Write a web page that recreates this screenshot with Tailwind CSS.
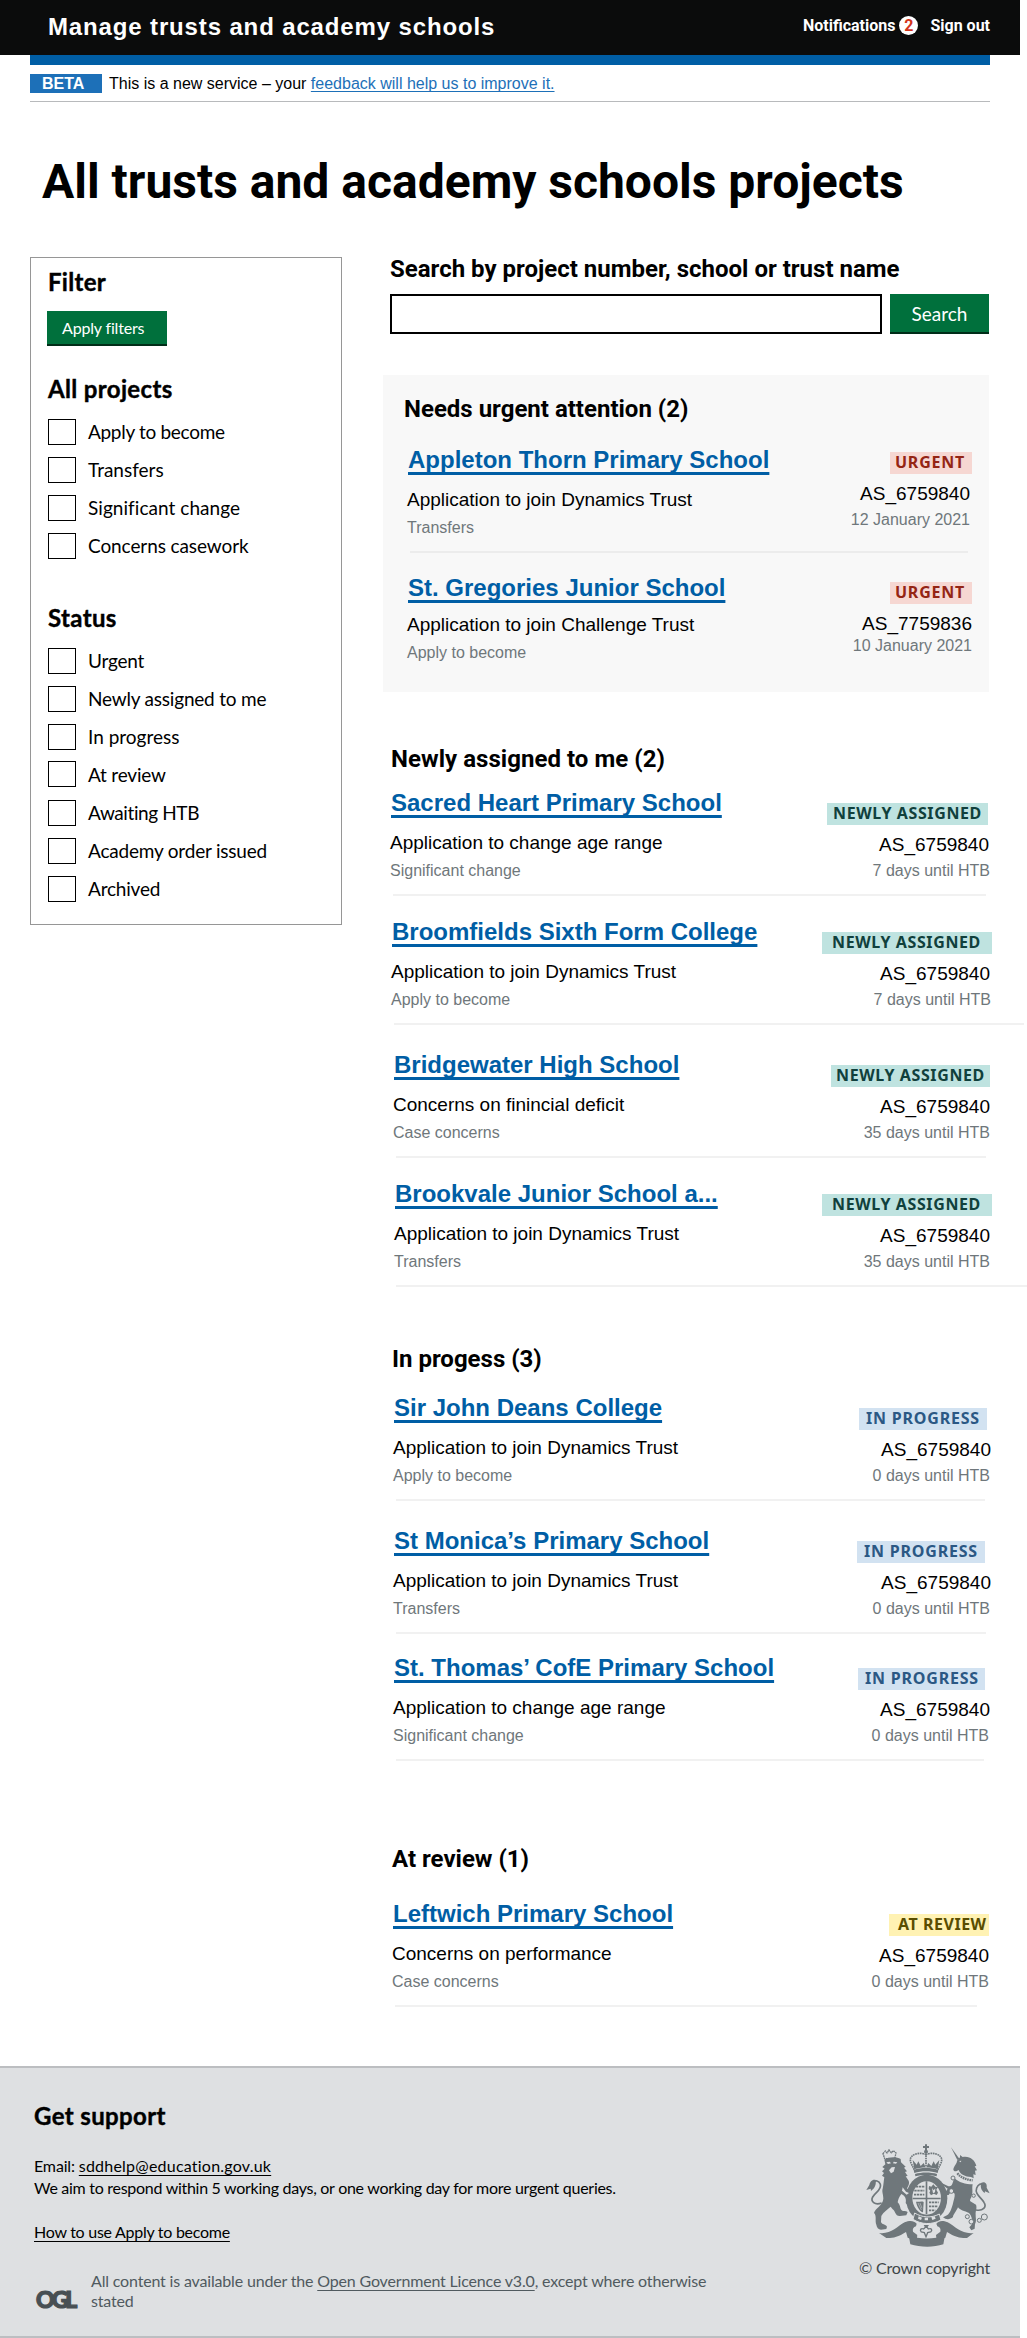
<!DOCTYPE html>
<html lang="en">
<head>
<meta charset="utf-8">
<title>Manage trusts and academy schools</title>
<script src="https://cdn.jsdelivr.net/npm/@tailwindcss/browser@4"></script>
</head>
<body class="bg-white text-black font-['Liberation_Sans',sans-serif]">
<div class="w-[1027px] overflow-hidden">
<header class="flex h-[55px] w-[1020px] justify-between bg-[#0b0c0c] pl-12 pr-[30px] text-white">
  <p class="pt-[13px] text-[24px] leading-[27px] font-bold tracking-[0.86px]">Manage trusts and academy schools</p>
  <nav class="flex items-start pt-4 font-['Roboto',sans-serif] text-[16px] leading-[19px] font-bold">
    <a>Notifications</a>
    <span class="ml-[4px] mr-[12px] size-[19px] rounded-full bg-white text-center text-[#d4351c]">2</span>
    <a>Sign out</a>
  </nav>
</header>

<div class="ml-[30px] w-[960px]">
  <div class="h-[10px] bg-[#005ea5]"></div>
  <div class="mt-[9px] flex border-b border-[#b8babc] pb-2 text-[16px] leading-[19px]">
    <strong class="w-[72px] bg-[#1d70b8] pl-[12px] text-white">BETA</strong>
    <p class="ml-[7px]">This is a new service – your <a class="text-[#1d70b8] underline decoration-1 underline-offset-[2px] [text-decoration-skip-ink:none]">feedback will help us to improve it.</a></p>
  </div>
  <h1 class="mt-[51px] pl-3 font-['Roboto',sans-serif] text-[48px] leading-[57px] font-bold">All trusts and academy schools projects</h1>
</div>

<div class="mt-[45px] ml-[30px] flex items-start">
  <!-- Filters -->
  <aside class="mt-[2px] h-[668px] w-[312px] shrink-0 border border-[#969696] pt-[9px] pl-[17px] font-['Lato',sans-serif]">
    <h2 class="text-[24px] leading-[29px] font-bold tracking-[0.3px] [-webkit-text-stroke:0.4px_black]">Filter</h2>
    <button class="mt-[15px] -ml-px block h-[35px] w-[120px] border-b-2 border-[#002d18] bg-[#00703c] pl-[15px] text-left text-[16px] leading-[29px] tracking-[-0.17px] text-white">Apply filters</button>
    <h3 class="mt-7 text-[24px] leading-[29px] font-bold tracking-[0.35px] [-webkit-text-stroke:0.4px_black]">All projects</h3>
    <ul class="mt-4 grid gap-3 text-[19px] leading-[23px]">
      <li class="flex h-[26px] gap-3"><span class="h-[26px] w-7 border border-black"></span><span class="pt-px tracking-[-0.3px]">Apply to become</span></li>
      <li class="flex h-[26px] gap-3"><span class="h-[26px] w-7 border border-black"></span><span class="pt-px">Transfers</span></li>
      <li class="flex h-[26px] gap-3"><span class="h-[26px] w-7 border border-black"></span><span class="pt-px tracking-[0.05px]">Significant change</span></li>
      <li class="flex h-[26px] gap-3"><span class="h-[26px] w-7 border border-black"></span><span class="pt-px tracking-[-0.1px]">Concerns casework</span></li>
    </ul>
    <h3 class="mt-11 text-[24px] leading-[29px] font-bold tracking-[0.35px] [-webkit-text-stroke:0.4px_black]">Status</h3>
    <ul class="mt-4 grid gap-3 text-[19px] leading-[23px] tracking-[-0.2px]">
      <li class="flex h-[26px] gap-3"><span class="h-[26px] w-7 border border-black"></span><span class="pt-px">Urgent</span></li>
      <li class="flex h-[26px] gap-3"><span class="h-[26px] w-7 border border-black"></span><span class="pt-px">Newly assigned to me</span></li>
      <li class="flex h-[26px] gap-3"><span class="h-[26px] w-7 border border-black"></span><span class="pt-px tracking-normal">In progress</span></li>
      <li class="flex h-[26px] gap-3"><span class="-mt-px h-[26px] w-7 border border-black"></span><span class="pt-px">At review</span></li>
      <li class="flex h-[26px] gap-3"><span class="h-[26px] w-7 border border-black"></span><span class="pt-px tracking-[-0.4px]">Awaiting HTB</span></li>
      <li class="flex h-[26px] gap-3"><span class="h-[26px] w-7 border border-black"></span><span class="pt-px">Academy order issued</span></li>
      <li class="flex h-[26px] gap-3"><span class="h-[26px] w-7 border border-black"></span><span class="pt-px">Archived</span></li>
    </ul>
  </aside>

  <main class="ml-[41px] w-[606px] shrink-0">
    <h2 class="pl-[7px] font-['Roboto',sans-serif] text-[24px] leading-[28px] font-bold">Search by project number, school or trust name</h2>
    <div class="mt-[11px] flex pl-[7px]">
      <input class="h-10 w-[492px] border-2 border-black" aria-label="Search">
      <button class="ml-2 h-10 w-[99px] border-b-2 border-[#002d18] bg-[#00703c] font-['Lato',sans-serif] text-[19px] leading-[33px] text-white">Search</button>
    </div>

    <!-- Needs urgent attention -->
    <section class="mt-[41px] h-[317px] bg-[#f8f8f8] pt-5">
      <h2 class="pl-[21px] font-['Roboto',sans-serif] text-[24px] leading-[28px] font-bold">Needs urgent attention (2)</h2>
      <article class="mt-[23px] flex justify-between pr-[19px] pl-6">
        <div>
          <h3 class="ml-px text-[24px] leading-[27px] font-bold text-[#005ea5] underline decoration-[2.5px] underline-offset-[4px] [text-decoration-skip-ink:none]">Appleton Thorn Primary School</h3>
          <p class="mt-4 text-[19px] leading-[21px]">Application to join Dynamics Trust</p>
          <p class="mt-[9px] text-[16px] leading-[17px] text-[#6f777b]">Transfers</p>
        </div>
        <div class="flex flex-col items-end">
          <span class="-mr-[2px] mt-[6px] h-[22px] w-[82px] bg-[#f6d7d2] pl-[5px] font-['Noto_Sans',sans-serif] text-[16px] leading-[21px] font-bold tracking-[0.77px] text-[#942514]">URGENT</span>
          <span class="mt-[9px] text-[19px] leading-[21px]">AS_6759840</span>
          <span class="mt-[7px] text-[16px] leading-[17px] text-[#6f777b]">12 January 2021</span>
        </div>
      </article>
      <div class="mt-[15px] ml-[27px] h-[2px] w-[558px] bg-[#ececec]"></div>
      <article class="mt-[21px] flex justify-between pr-[17px] pl-6">
        <div>
          <h3 class="ml-px text-[24px] leading-[27px] font-bold text-[#005ea5] underline decoration-[2.5px] underline-offset-[4px] [text-decoration-skip-ink:none]">St. Gregories Junior School</h3>
          <p class="mt-[13px] text-[19px] leading-[21px]">Application to join Challenge Trust</p>
          <p class="mt-[9px] text-[16px] leading-[17px] text-[#6f777b]">Apply to become</p>
        </div>
        <div class="flex flex-col items-end">
          <span class="mt-2 h-[22px] w-[82px] bg-[#f6d7d2] pl-[5px] font-['Noto_Sans',sans-serif] text-[16px] leading-[21px] font-bold tracking-[0.77px] text-[#942514]">URGENT</span>
          <span class="mt-[9px] text-[19px] leading-[21px]">AS_7759836</span>
          <span class="mt-[3px] text-[16px] leading-[17px] text-[#6f777b]">10 January 2021</span>
        </div>
      </article>
    </section>

    <!-- Newly assigned -->
    <section class="mt-[53px]">
      <h2 class="pl-2 font-['Roboto',sans-serif] text-[24px] leading-[28px] font-bold tracking-[0.04px]">Newly assigned to me (2)</h2>
      <article class="mt-4 flex justify-between pl-[7px]">
        <div>
          <h3 class="ml-px text-[24px] leading-[27px] font-bold text-[#005ea5] underline decoration-[2.5px] underline-offset-[4px] [text-decoration-skip-ink:none]">Sacred Heart Primary School</h3>
          <p class="mt-4 text-[19px] leading-[21px]">Application to change age range</p>
          <p class="mt-[9px] text-[16px] leading-[17px] text-[#6f777b]">Significant change</p>
        </div>
        <div class="flex flex-col items-end">
          <span class="mt-[14px] mr-[1px] h-[22px] w-[161px] bg-[#bfe3e0] pl-[6px] font-['Noto_Sans',sans-serif] text-[16px] leading-[21px] font-bold tracking-[0.62px] whitespace-nowrap text-[#10403c]">NEWLY ASSIGNED</span>
          <span class="mt-[9px] text-[19px] leading-[21px]">AS_6759840</span>
          <span class="-mr-px mt-[7px] text-[16px] leading-[17px] text-[#6f777b]">7 days until HTB</span>
        </div>
      </article>
      <div class="mt-[15px] ml-[10px] h-[2px] w-[593px] bg-[#f1f1f1]"></div>

      <article class="mt-[22px] flex justify-between pl-2">
        <div>
          <h3 class="ml-px text-[24px] leading-[27px] font-bold text-[#005ea5] underline decoration-[2.5px] underline-offset-[4px] [text-decoration-skip-ink:none]">Broomfields Sixth Form College</h3>
          <p class="mt-4 text-[19px] leading-[21px]">Application to join Dynamics Trust</p>
          <p class="mt-[9px] text-[16px] leading-[17px] text-[#6f777b]">Apply to become</p>
        </div>
        <div class="flex flex-col items-end">
          <span class="mt-[14px] -mr-[3px] h-[22px] w-[170px] bg-[#bfe3e0] pl-[10px] font-['Noto_Sans',sans-serif] text-[16px] leading-[21px] font-bold tracking-[0.62px] whitespace-nowrap text-[#10403c]">NEWLY ASSIGNED</span>
          <span class="-mr-px mt-[9px] text-[19px] leading-[21px]">AS_6759840</span>
          <span class="-mr-[2px] mt-[7px] text-[16px] leading-[17px] text-[#6f777b]">7 days until HTB</span>
        </div>
      </article>
      <div class="mt-[15px] ml-[11px] h-[2px] w-[630px] bg-[#f1f1f1]"></div>

      <article class="mt-[26px] flex justify-between pl-[10px]">
        <div>
          <h3 class="ml-px text-[24px] leading-[27px] font-bold text-[#005ea5] underline decoration-[2.5px] underline-offset-[4px] [text-decoration-skip-ink:none]">Bridgewater High School</h3>
          <p class="mt-4 text-[19px] leading-[21px]">Concerns on finincial deficit</p>
          <p class="mt-[9px] text-[16px] leading-[17px] text-[#6f777b]">Case concerns</p>
        </div>
        <div class="flex flex-col items-end">
          <span class="mt-[14px] -mr-px h-[22px] w-[159px] bg-[#bfe3e0] pl-[5px] font-['Noto_Sans',sans-serif] text-[16px] leading-[21px] font-bold tracking-[0.62px] whitespace-nowrap text-[#10403c]">NEWLY ASSIGNED</span>
          <span class="-mr-px mt-[9px] text-[19px] leading-[21px]">AS_6759840</span>
          <span class="-mr-px mt-[7px] text-[16px] leading-[17px] text-[#6f777b]">35 days until HTB</span>
        </div>
      </article>
      <div class="mt-[15px] ml-[13px] h-[2px] w-[590px] bg-[#f1f1f1]"></div>

      <article class="mt-[22px] flex justify-between pl-[11px]">
        <div>
          <h3 class="ml-px text-[24px] leading-[27px] font-bold text-[#005ea5] underline decoration-[2.5px] underline-offset-[4px] [text-decoration-skip-ink:none]">Brookvale Junior School a...</h3>
          <p class="mt-4 text-[19px] leading-[21px]">Application to join Dynamics Trust</p>
          <p class="mt-[9px] text-[16px] leading-[17px] text-[#6f777b]">Transfers</p>
        </div>
        <div class="flex flex-col items-end">
          <span class="mt-[14px] -mr-[3px] h-[22px] w-[170px] bg-[#bfe3e0] pl-[10px] font-['Noto_Sans',sans-serif] text-[16px] leading-[21px] font-bold tracking-[0.62px] whitespace-nowrap text-[#10403c]">NEWLY ASSIGNED</span>
          <span class="-mr-px mt-[9px] text-[19px] leading-[21px]">AS_6759840</span>
          <span class="-mr-px mt-[7px] text-[16px] leading-[17px] text-[#6f777b]">35 days until HTB</span>
        </div>
      </article>
      <div class="mt-[15px] ml-[13px] h-[2px] w-[631px] bg-[#f1f1f1]"></div>
    </section>

    <!-- In progress -->
    <section class="mt-[58px]">
      <h2 class="pl-[9px] font-['Roboto',sans-serif] text-[24px] leading-[28px] font-bold">In progess (3)</h2>
      <article class="mt-[21px] flex justify-between pl-[10px]">
        <div>
          <h3 class="ml-px text-[24px] leading-[27px] font-bold text-[#005ea5] underline decoration-[2.5px] underline-offset-[4px] [text-decoration-skip-ink:none]">Sir John Deans College</h3>
          <p class="mt-4 text-[19px] leading-[21px]">Application to join Dynamics Trust</p>
          <p class="mt-[9px] text-[16px] leading-[17px] text-[#6f777b]">Apply to become</p>
        </div>
        <div class="flex flex-col items-end">
          <span class="mt-[14px] mr-[2px] h-[22px] w-[128px] bg-[#d2e2f1] pl-[7px] font-['Noto_Sans',sans-serif] text-[16px] leading-[21px] font-bold tracking-[0.8px] text-[#2b5884]">IN PROGRESS</span>
          <span class="-mr-[2px] mt-[9px] text-[19px] leading-[21px]">AS_6759840</span>
          <span class="-mr-px mt-[7px] text-[16px] leading-[17px] text-[#6f777b]">0 days until HTB</span>
        </div>
      </article>
      <div class="mt-[15px] ml-[13px] h-[2px] w-[589px] bg-[#f1f1f1]"></div>

      <article class="mt-[26px] flex justify-between pl-[10px]">
        <div>
          <h3 class="ml-px text-[24px] leading-[27px] font-bold text-[#005ea5] underline decoration-[2.5px] underline-offset-[4px] [text-decoration-skip-ink:none]">St Monica’s Primary School</h3>
          <p class="mt-4 text-[19px] leading-[21px]">Application to join Dynamics Trust</p>
          <p class="mt-[9px] text-[16px] leading-[17px] text-[#6f777b]">Transfers</p>
        </div>
        <div class="flex flex-col items-end">
          <span class="mt-[14px] mr-1 h-[22px] w-[128px] bg-[#d2e2f1] pl-[7px] font-['Noto_Sans',sans-serif] text-[16px] leading-[21px] font-bold tracking-[0.8px] text-[#2b5884]">IN PROGRESS</span>
          <span class="-mr-[2px] mt-[9px] text-[19px] leading-[21px]">AS_6759840</span>
          <span class="-mr-px mt-[7px] text-[16px] leading-[17px] text-[#6f777b]">0 days until HTB</span>
        </div>
      </article>
      <div class="mt-[15px] ml-[13px] h-[2px] w-[590px] bg-[#f1f1f1]"></div>

      <article class="mt-5 flex justify-between pl-[10px]">
        <div>
          <h3 class="ml-px text-[24px] leading-[27px] font-bold text-[#005ea5] underline decoration-[2.5px] underline-offset-[4px] [text-decoration-skip-ink:none]">St. Thomas’ CofE Primary School</h3>
          <p class="mt-4 text-[19px] leading-[21px]">Application to change age range</p>
          <p class="mt-[9px] text-[16px] leading-[17px] text-[#6f777b]">Significant change</p>
        </div>
        <div class="flex flex-col items-end">
          <span class="mt-[14px] mr-1 h-[22px] w-[127px] bg-[#d2e2f1] pl-[7px] font-['Noto_Sans',sans-serif] text-[16px] leading-[21px] font-bold tracking-[0.8px] text-[#2b5884]">IN PROGRESS</span>
          <span class="-mr-px mt-[9px] text-[19px] leading-[21px]">AS_6759840</span>
          <span class="mt-[7px] text-[16px] leading-[17px] text-[#6f777b]">0 days until HTB</span>
        </div>
      </article>
      <div class="mt-[15px] ml-[13px] h-[2px] w-[588px] bg-[#f1f1f1]"></div>
    </section>

    <!-- At review -->
    <section class="mt-[84px]">
      <h2 class="pl-[9px] font-['Roboto',sans-serif] text-[24px] leading-[28px] font-bold">At review (1)</h2>
      <article class="mt-[27px] flex justify-between pl-[9px]">
        <div>
          <h3 class="ml-px text-[24px] leading-[27px] font-bold text-[#005ea5] underline decoration-[2.5px] underline-offset-[4px] [text-decoration-skip-ink:none]">Leftwich Primary School</h3>
          <p class="mt-4 text-[19px] leading-[21px]">Concerns on performance</p>
          <p class="mt-[9px] text-[16px] leading-[17px] text-[#6f777b]">Case concerns</p>
        </div>
        <div class="flex flex-col items-end">
          <span class="mt-[14px] h-[22px] w-[100px] bg-[#fff2b3] pl-[9px] font-['Noto_Sans',sans-serif] text-[16px] leading-[21px] font-bold tracking-[0.53px] text-[#594d00]">AT REVIEW</span>
          <span class="mt-[9px] text-[19px] leading-[21px]">AS_6759840</span>
          <span class="mt-[7px] text-[16px] leading-[17px] text-[#6f777b]">0 days until HTB</span>
        </div>
      </article>
      <div class="mt-[15px] ml-[12px] h-[2px] w-[582px] bg-[#f1f1f1]"></div>
    </section>
  </main>
</div>

<footer class="mt-[59px] flex h-[272px] w-[1020px] justify-between border-y-2 border-[#bcbec1] bg-[#dee0e2] pr-[30px] pl-[34px] font-['Lato',sans-serif] text-[16px] leading-[19px]">
  <div class="pt-[33px]">
    <h2 class="text-[24px] leading-[29px] font-bold tracking-[0.38px] [-webkit-text-stroke:0.4px_black]">Get support</h2>
    <p class="mt-[26px] tracking-[-0.15px]">Email: <a class="tracking-[0.22px] underline decoration-1 underline-offset-[3px] [text-decoration-skip-ink:none]">sddhelp@education.gov.uk</a></p>
    <p class="mt-[3px] tracking-[-0.28px]">We aim to respond within 5 working days, or one working day for more urgent queries.</p>
    <p class="mt-[25px] tracking-[-0.27px]"><a class="underline decoration-1 underline-offset-[3px] [text-decoration-skip-ink:none]">How to use Apply to become</a></p>
    <div class="mt-[30px] flex text-[#505a5f]">
      <span class="mt-[16px] w-[57px] pl-[2px] text-[23px] leading-[24px] font-black tracking-[-3px] text-[#484f53] [-webkit-text-stroke:1.2px_#484f53]">OGL</span>
      <p class="w-[640px] leading-5 tracking-[-0.17px]">All content is available under the <a class="underline decoration-1 underline-offset-[3px] [text-decoration-skip-ink:none]">Open Government Licence v3.0</a>, except where otherwise<br>stated</p>
    </div>
  </div>
  <div class="flex flex-col items-end pt-[76px]">
    <!-- Royal coat of arms -->
    <svg class="h-[103px] w-[124px]" viewBox="117 100 372 309" fill="#6f777b">
      <!-- crown -->
      <path d="M294 101h6v5h6v6h-6v6h-6v-6h-6v-6h6z"/>
      <circle cx="297" cy="123" r="6"/>
      <g fill="none" stroke="#6f777b" stroke-width="5" stroke-dasharray="5 2">
        <path d="M297 132c-14-8-46-4-47 15 0 11 8 19 12 32"/>
        <path d="M297 132c14-8 46-4 47 15 0 11-8 19-12 32"/>
        <path d="M297 134v34"/>
      </g>
      <path d="M257 148l12 14 5-10 7 14 9-9 7 15 7-15 9 9 7-14 5 10 12-14-5 28c-18-7-52-7-70 0z"/>
      <path d="M260 178c20-8 54-8 74 0l-2 9c-20-7-50-7-70 0z"/>
      <path d="M264 190c20-6 46-6 66 0l-1 7c-20-5-44-5-64 0z"/>
      <!-- garter and shield -->
      <ellipse cx="299" cy="263" rx="62" ry="71"/>
      <ellipse cx="299" cy="262" rx="43" ry="50" fill="#dee0e2"/>
      <path d="M296 212h5v99h-5zM257 261h84v5h-84z"/>
      <g fill="none" stroke="#6f777b" stroke-width="5" stroke-dasharray="7 2">
        <path d="M267 228h25M262 240h30M261 252h31M306 275h29M306 287h27M306 299h19"/>
      </g>
      <path d="M306 226l7 2 6-7 6 7 8 1-5 8 5 9-4 7-9-4-8 5-5-8 3-6-5-5z"/>
      <path d="M315 232l5 7 5-6-1 12-6 3z" fill="#dee0e2"/>
      <path d="M267 273c8 2 16-2 23 1l-2 31c-10-3-18-17-21-32z"/>
      <path d="M273 277l10 21M279 277l6 16" stroke="#dee0e2" stroke-width="1.5"/>
      <path d="M263 307c22 14 50 16 74 3l5 18c-27 15-59 14-84-2z" stroke="#dee0e2" stroke-width="3"/>
      <path d="M275 317l10 4-3 7-9-4zM293 321h10v8h-10zM313 320l10-3 3 7-10 4z" fill="#dee0e2"/>
      <!-- lion -->
      <path d="M168 129l7-8 5 6 6-9 7 8 6-6 8 7-4 17h-30z" fill="none" stroke="#6f777b" stroke-width="4" stroke-dasharray="5 2"/>
      <path d="M184 117h5v5h-5z"/>
      <path d="M172 147c11-8 36-10 49-2l1 10 14 13-5 3 9 11-6 2 8 12-6 1 8 12c5 8 0 18-4 24l9 9c8 8 6 24-1 35l6 3-5 7-7-3-6-7c3-13-2-22-13-27-6 8-10 16-11 25 10 10 6 22 14 25 4 2 10-1 16 4l-4 10-19 2c-15 1-13-14-22-20l-6-8c-9 8-22 16-28 28l-1 18c2 8 14 6 18 14l-2 7-16 2c-8-1-13-7-14-15-5-11 2-27-7-35 3-14 27-23 28-43 0-14-5-21-2-30 3-12 3-25 5-34l-7-5 6-8-6-5 8-8-7-5 9-8z"/>
      <path d="M178 155l10-2 4 5-9 2zM200 153l11 2-4 4-9-1zM194 170l10-1-4 14-8 5-6-9z" fill="#dee0e2"/>
      <path d="M227 230l10 13 9 4-7 5-14-12zM224 263l10 8-3 6-9-5z" fill="#dee0e2"/>
      <path d="M164 277c-21 8-34-5-27-18 8-15 28-21 23-38-4-12-15-13-21-6" fill="none" stroke="#6f777b" stroke-width="5"/>
      <path d="M146 208c-10-3-17 6-19 15l-9 15 13-4 1 7c12-9 16-19 14-33z"/>
      <!-- unicorn -->
      <path d="M372 110l25 34-6 4z"/>
      <path d="M399 133l8 6c19-5 38 9 41 27l-5 1 7 12-6 1 2 13-7-2 1 12-8-4c-17-1-32-7-37-21-8 5-13 6-16-1 1-12 11-17 11-27l9-10z"/>
      <path d="M396 151l7-1-2 5z" fill="#dee0e2"/>
      <path d="M391 188c11 13 28 19 46 21" fill="none" stroke="#6f777b" stroke-width="7" stroke-dasharray="5 2"/>
      <path d="M382 202c13 13 33 19 55 19-3 14 2 22-3 34-1 8-7 11-4 17l17 10c4 10-2 19-1 30 0 12 3 18-2 28l-1 14-10 5-6-9 8-9c2-15-1-25-9-34-14-6-27-8-33-17-5 12-15 22-15 29-9 8-20 9-30 1l12-6c10-7 13-20 17-32 3-14 7-23 6-33l-10-8-8 12-14 1-8-6 13-5 6-9-11-8-13 4-5-8 11-5 17 8c9 4 13 0 15-6z"/>
      <g fill="#dee0e2" stroke="#6f777b" stroke-width="3">
        <circle cx="378" cy="202" r="6"/><circle cx="373" cy="241" r="7"/><circle cx="440" cy="255" r="5"/>
        <circle cx="421" cy="318" r="6"/><circle cx="433" cy="333" r="7"/><circle cx="457" cy="329" r="6"/><circle cx="472" cy="319" r="9"/>
      </g>
      <path d="M447 298c21 4 33-9 24-23-8-15-29-24-22-43 4-11 14-16 21-10" fill="none" stroke="#6f777b" stroke-width="5"/>
      <path d="M462 217c12-6 19 3 17 14l9 17-14-6-1 5c-11-9-13-17-11-30z"/>
      <!-- ribbon and rose -->
      <path d="M156 367c34 5 54-19 77-32 16-7 28-5 36 4l-2 8c-8 2-11 8-9 16l13 10-1 9-15 4-13-5-5-17c-24 16-43 19-59 18z"/>
      <path d="M440 367c-34 5-55-19-78-32-16-7-26-5-34 4l3 8c8 2 11 8 9 16l-13 10 1 9 15 4 12-5 5-17c24 16 44 19 60 18z"/>
      <path d="M245 374c30 13 78 13 109 0l-5 27c-30 10-69 9-99 0z"/>
      <path d="M271 373c16 5 39 5 55 0" fill="none" stroke="#dee0e2" stroke-width="2"/>
      <path d="M290 343h16l-6 8v20h-5v-20z"/>
      <path d="M298 347l6 8c10-4 13 4 7 9l-9 2-5 12-5-12-9-2c-6-6-1-13 7-9z" fill="#dee0e2" stroke="#6f777b" stroke-width="4"/>
    </svg>
    <p class="mt-[11px] tracking-[-0.19px] text-[#3f4548]">© Crown copyright</p>
  </div>
</footer>
</div>
</body>
</html>
